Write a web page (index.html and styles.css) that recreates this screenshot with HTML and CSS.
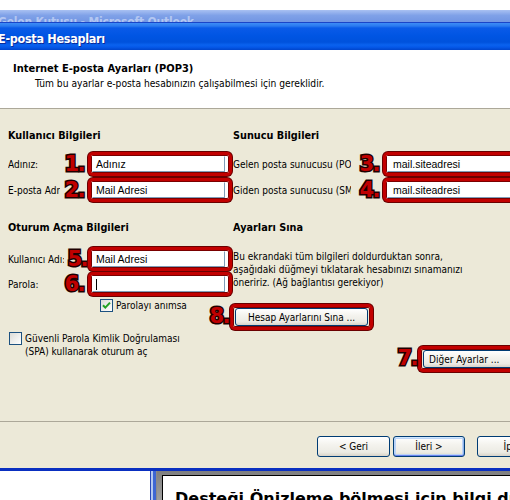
FILE: index.html
```html
<!DOCTYPE html>
<html lang="tr">
<head>
<meta charset="utf-8">
<title>E-posta Hesapları</title>
<link rel="stylesheet" href="styles.css">
</head>
<body>
<div class="screen">
  <div class="outlook-bar"><span class="outlook-text">Gelen Kutusu - Microsoft Outlook</span></div>
  <div class="dialog">
    <div class="titlebar"><span class="title-text">E-posta Hesapları</span></div>
    <div class="header">
      <div class="h-title">Internet E-posta Ayarları (POP3)</div>
      <div class="h-sub">Tüm bu ayarlar e-posta hesabınızın çalışabilmesi için gereklidir.</div>
    </div>
    <div class="body">
      <div class="section sec1">
        <div class="col col-left">
          <div class="heading">Kullanıcı Bilgileri</div>
          <div class="field f1">
            <span class="label">Adınız:</span><span class="num">1.</span>
            <span class="redbox"><span class="input">Adınız</span></span>
          </div>
          <div class="field f2">
            <span class="label">E-posta Adresi:</span><span class="num">2.</span>
            <span class="redbox"><span class="input">Mail Adresi</span></span>
          </div>
        </div>
        <div class="col col-right">
          <div class="heading">Sunucu Bilgileri</div>
          <div class="field f1">
            <span class="label">Gelen posta sunucusu (POP3):</span><span class="num">3.</span>
            <span class="redbox"><span class="input">mail.siteadresi</span></span>
          </div>
          <div class="field f2">
            <span class="label">Giden posta sunucusu (SMTP):</span><span class="num">4.</span>
            <span class="redbox"><span class="input">mail.siteadresi</span></span>
          </div>
        </div>
      </div>
      <div class="section sec2">
        <div class="col col-left">
          <div class="heading">Oturum Açma Bilgileri</div>
          <div class="field f5">
            <span class="label">Kullanıcı Adı:</span><span class="num">5.</span>
            <span class="redbox"><span class="input">Mail Adresi</span></span>
          </div>
          <div class="field f6">
            <span class="label">Parola:</span><span class="num">6.</span>
            <span class="redbox"><span class="input"><span class="caret"></span></span></span>
          </div>
          <div class="check-row remember">
            <span class="checkbox checked">
              <svg width="11" height="11" viewBox="0 0 11 11"><path d="M2 5.2 L4.3 7.6 L9 2.6" fill="none" stroke="#21a121" stroke-width="2"/></svg>
            </span>
            <span class="check-label">Parolayı anımsa</span>
          </div>
          <div class="check-row spa">
            <span class="checkbox"></span>
            <span class="check-label">Güvenli Parola Kimlik Doğrulaması<br>(SPA) kullanarak oturum aç</span>
          </div>
        </div>
        <div class="col col-right">
          <div class="heading">Ayarları Sına</div>
          <p class="info">Bu ekrandaki tüm bilgileri doldurduktan sonra,<br>aşağıdaki düğmeyi tıklatarak hesabınızı sınamanızı<br>öneririz. (Ağ bağlantısı gerekiyor)</p>
          <div class="annot test-annot">
            <span class="num abs">8.</span>
            <span class="redbox btnbox"><span class="btn test-btn">Hesap Ayarlarını Sına ...</span></span>
          </div>
          <div class="annot more-annot">
            <span class="num abs">7.</span>
            <span class="redbox btnbox"><span class="btn more-btn">Diğer Ayarlar ...</span></span>
          </div>
        </div>
      </div>
    </div>
    <div class="buttonbar">
      <span class="btn nav">&lt; Geri</span>
      <span class="btn nav default">İleri &gt;</span>
      <span class="btn nav cancel">İptal</span>
    </div>
  </div>
  <div class="below">
    <div class="below-left"></div>
    <div class="below-frame"></div>
    <div class="pane">
      <div class="pane-inner">Desteği Önizleme bölmesi için bilgi düğmesini tıklatın  M</div>
    </div>
  </div>
</div>
</body>
</html>
```

FILE: styles.css
```css
* { box-sizing: border-box; }
html, body { margin: 0; padding: 0; }
body {
  background: #fff;
  font-family: "DejaVu Sans Condensed", "DejaVu Sans", sans-serif;
  font-size: 10px;
  color: #000;
}
.screen {
  width: 510px;
  height: 500px;
  overflow: hidden;
  display: flex;
  flex-direction: column;
  padding-top: 10px;
}
.outlook-bar {
  flex: none;
  height: 12px;
  overflow: hidden;
  background: linear-gradient(#a9c1f2, #7fa1e8 45%, #7296e3);
  padding-top: 6px;
  white-space: nowrap;
}
.outlook-text {
  display: block;
  margin-left: -2px;
  font-family: "DejaVu Sans Condensed", "DejaVu Sans", sans-serif;
  font-weight: bold;
  font-size: 12px;
  line-height: 12px;
  letter-spacing: -0.2px;
  color: #b3c6f1;
}
.dialog {
  flex: none;
  width: 560px;
  display: flex;
  flex-direction: column;
  background: #ece9d8;
  border-bottom: 3px solid #0a2fc0;
}
.titlebar {
  height: 28px;
  padding-top: 7px;
  line-height: 20px;
  background: linear-gradient(#1a45c8 0, #1a45c8 1px, #3d8cf6 1px, #2a7af0 4px, #0a5ae8 6px, #0055e3 50%, #0052dc 72%, #0a62ef 82%, #0558e8 90%, #0045cc 100%);
  color: #fff;
  white-space: nowrap;
  overflow: hidden;
}
.title-text {
  display: block;
  margin-left: -2px;
  font-weight: bold;
  font-size: 12.5px;
  letter-spacing: -0.3px;
  text-shadow: 1px 1px 0 #0a2a9a;
}
.header {
  height: 59px;
  background: #fff;
  border-bottom: 1px solid #aca899;
  padding: 12px 0 0 13px;
}
.h-title {
  font-weight: bold;
  font-size: 11px;
  line-height: 13px;
}
.h-sub {
  margin: 2px 0 0 22px;
  font-size: 10.2px;
  line-height: 13px;
}
.body {
  height: 313px;
  border-bottom: 1px solid #aca899;
  padding: 20px 0 0 8px;
  overflow: hidden;
}
.section {
  display: grid;
  grid-template-columns: 225px 1fr;
}
.sec2 { margin-top: 19px; }
.col { display: flex; flex-direction: column; min-width: 0; }
.heading {
  font-weight: bold;
  font-size: 10.8px;
  line-height: 13px;
  white-space: nowrap;
}
.field {
  display: flex;
  align-items: center;
  height: 24px;
}
.f1 { margin-top: 10px; }
.f2 { margin-top: 2px; }
.f5 { margin-top: 13px; }
.f6 { margin-top: 1px; }
.label {
  flex: none;
  width: 52px;
  overflow: hidden;
  white-space: nowrap;
  line-height: 13px;
}
.f5 .label { width: 56px; }
.col-right .label { width: 118px; }
.num {
  flex: none;
  width: 28px;
  padding-right: 4px;
  text-align: right;
  font-family: "DejaVu Sans", sans-serif;
  font-weight: bold;
  font-size: 21px;
  line-height: 21px;
  letter-spacing: -1.5px;
  color: #c00000;
  -webkit-text-stroke: 3px #1e0000;
  paint-order: stroke fill;
}
.f5 .num { width: 24px; padding-right: 1px; }
.col-right .num { width: 32px; padding-right: 4px; }
.redbox {
  flex: none;
  display: flex;
  width: 144px;
  height: 24px;
  border: 3px solid #c20000;
  border-radius: 5px;
  box-shadow: 0 0 0 1px #6a0000, inset 0 0 0 1px #7a0000;
  padding: 1px 4px 1px 1px;
  background: #fff;
}
.col-right .redbox { width: 160px; }
.input {
  flex: 1;
  display: flex;
  align-items: center;
  background: #fff;
  border: 1px solid #7f9db9;
  border-left-color: #fff;
  border-top-color: #fff;
  padding-left: 3px;
  font-family: "Liberation Sans", Arial, sans-serif;
  font-size: 10.5px;
  white-space: nowrap;
  overflow: hidden;
}
.col-right .input { padding-left: 5px; }
.caret {
  display: block;
  width: 1px;
  height: 11px;
  background: #000;
}
.check-row {
  display: flex;
  align-items: flex-start;
}
.remember { margin: 3px 0 0 92px; }
.spa { margin: 20px 0 0 1px; }
.checkbox {
  flex: none;
  width: 13px;
  height: 13px;
  border: 1px solid #1c5180;
  background: linear-gradient(135deg, #dcdcd7, #fff);
  display: flex;
  align-items: center;
  justify-content: center;
}
.check-label {
  margin-left: 3px;
  line-height: 13px;
  white-space: nowrap;
}
.info {
  margin: 16px 0 0 0;
  line-height: 13px;
  white-space: nowrap;
}
.annot {
  position: relative;
  display: flex;
}
.num.abs {
  position: absolute;
  right: calc(100% + 1px);
  top: 2px;
  width: auto;
  padding-right: 0;
}
.test-annot { margin: 15px 0 0 -3px; }
.more-annot { margin: 16px 0 0 185px; }
.col-right .btnbox {
  height: 26px;
  width: auto;
  padding: 1px 2px;
  background: #ece9d8;
}
.btn {
  display: flex;
  align-items: center;
  justify-content: center;
  border: 1px solid #003c74;
  border-radius: 3px;
  background: linear-gradient(#ffffff, #f4f3ee 40%, #ecebe4 80%, #d8d3c8);
  white-space: nowrap;
  line-height: 13px;
}
.test-btn { width: 133px; height: 18px; }
.more-btn { width: 120px; height: 18px; justify-content: flex-start; padding-left: 5px; }
.buttonbar {
  height: 46px;
  display: flex;
  align-items: flex-start;
  padding: 14px 0 0 317px;
}
.nav {
  width: 73px;
  height: 21px;
}
.nav.default {
  margin-left: 3px;
  width: 72px;
  box-shadow: inset 0 1px 0 #cee7ff, inset 0 -1px 0 #6982ee, inset 1px 0 0 #b8d3f8, inset -1px 0 0 #8cb0ea, inset 0 0 0 2px #bcd4f6;
}
.nav.cancel { margin-left: 12px; }
.below {
  flex: 1;
  display: flex;
  background: #fff;
}
.below-left { width: 150px; flex: none; }
.below-frame {
  width: 7px;
  flex: none;
  background: linear-gradient(90deg, #2948b8 0 1px, #b4c8f0 1px 3px, #3d66d4 3px 6px, #8a8a8a 6px 7px);
}
.pane {
  flex: 1;
  background: linear-gradient(#7f7f7f, #a9a9a9);
  padding: 4px 0 0 5px;
  display: flex;
}
.pane-inner {
  flex: 1;
  background: #fff;
  border-top: 1px solid #000;
  border-left: 1px solid #000;
  padding: 13px 0 0 12px;
  font-family: "DejaVu Sans", sans-serif;
  font-weight: bold;
  font-size: 16px;
  line-height: 20px;
  white-space: nowrap;
  overflow: hidden;
}
```
